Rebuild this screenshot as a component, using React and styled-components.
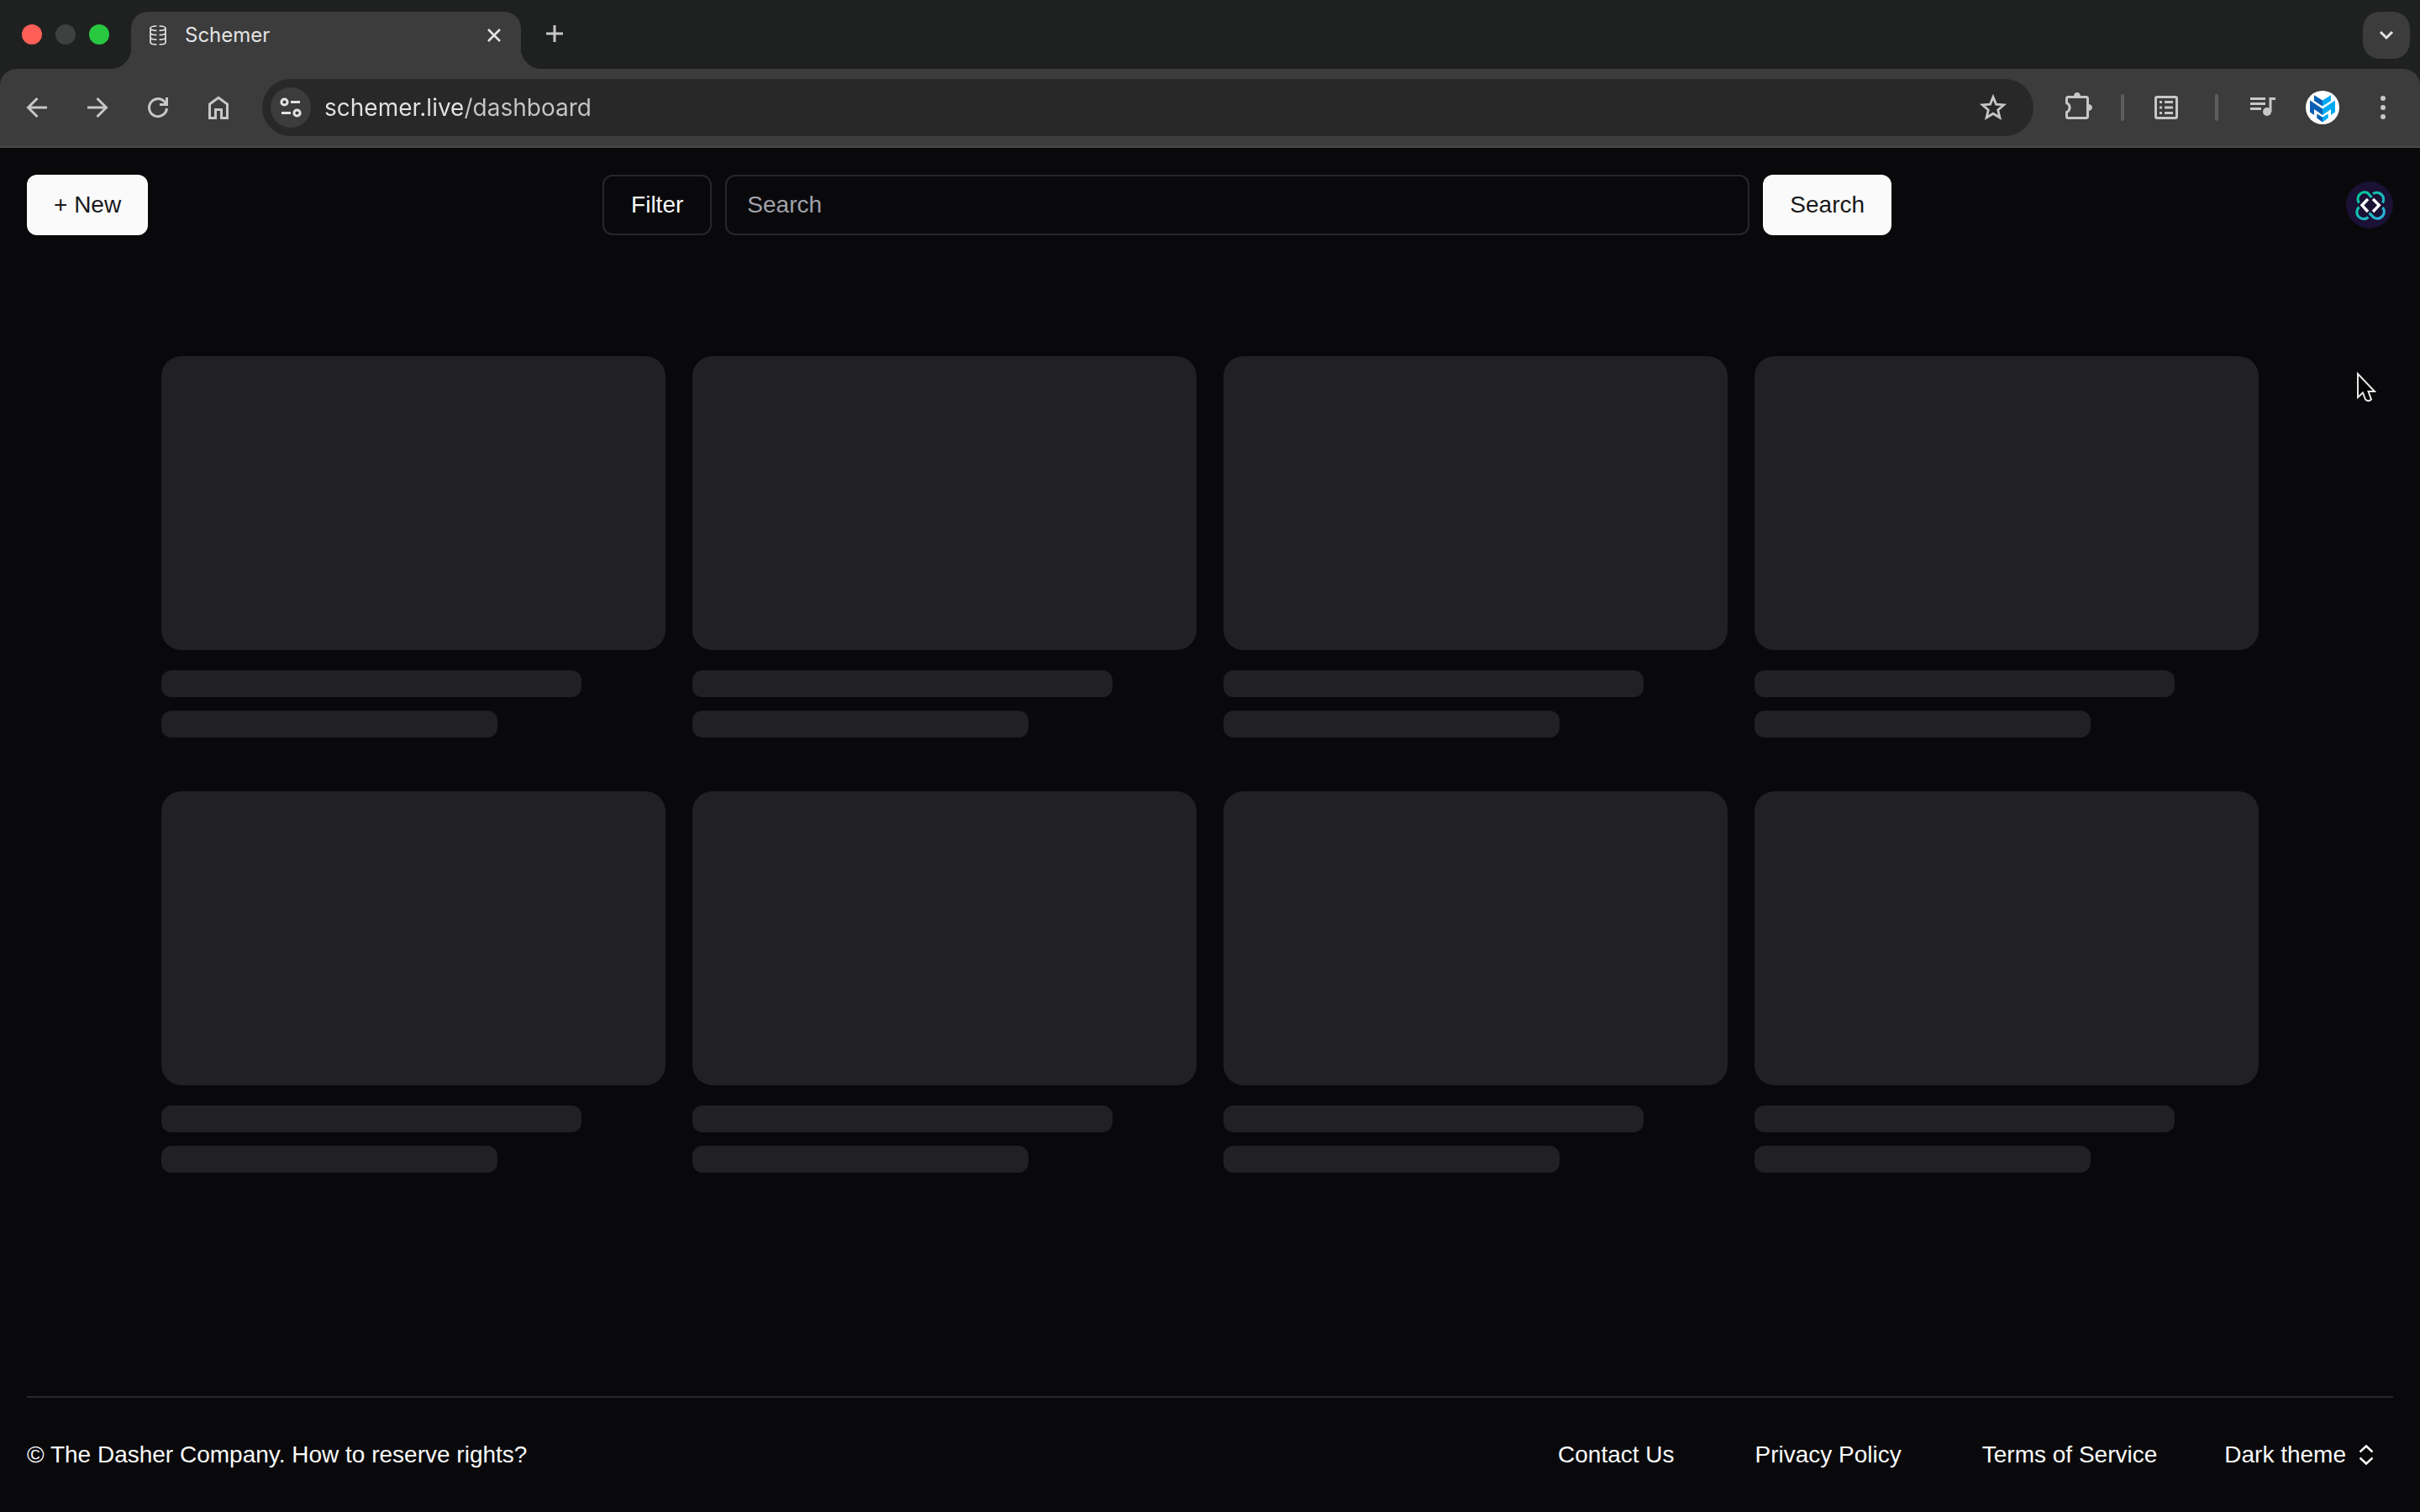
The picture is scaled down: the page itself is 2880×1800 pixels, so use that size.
import React from "react";
import styled, { createGlobalStyle } from "styled-components";

const ui = `Inter, "Noto Sans", sans-serif`;
const page = `"Liberation Sans", Arial, sans-serif`;

const GlobalStyle = createGlobalStyle`
  *, *::before, *::after { box-sizing: border-box; }
  body { margin: 0; background: #09090b; color: #fafafa; font-family: ${page}; font-size: 28px; }
  button, input, select { font: inherit; color: inherit; margin: 0; border: 0; background: none; outline: none; }
  button { cursor: pointer; padding: 0; }
  a { color: inherit; text-decoration: none; }
  svg { display: block; flex: none; overflow: visible; }
`;

const Window = styled.div`
  display: flex;
  flex-direction: column;
  min-height: 100vh;
`;

/* Browser chrome */
const TabStrip = styled.div`
  display: flex;
  height: 82px;
  padding: 14px 12px 0 26px;
  background: #1f2120;
`;
const Lights = styled.div`
  display: flex;
  gap: 16px;
  padding-top: 15px;
  width: 130px;
`;
const Light = styled.button`
  width: 24px;
  height: 24px;
  border-radius: 50%;
  background: ${(p) => p.$color};
`;
const Tab = styled.div`
  position: relative;
  display: flex;
  align-items: center;
  width: 464px;
  height: 68px;
  padding: 0 24px 12px 22px;
  border-radius: 20px 20px 0 0;
  background: #3c3c3c;
  color: #e3e3e3;
  font: 400 24px/32px ${ui};
  &::before, &::after {
    content: "";
    position: absolute;
    bottom: 0;
    width: 24px;
    height: 24px;
  }
  &::before { right: 100%; background: radial-gradient(circle at 0 0, transparent 24px, #3c3c3c 24px); }
  &::after { left: 100%; background: radial-gradient(circle at 100% 0, transparent 24px, #3c3c3c 24px); }
`;
const TabTitle = styled.span`
  flex: 1;
  padding-left: 22px;
`;
const NewTab = styled.button`
  display: grid;
  place-items: center;
  width: 48px;
  height: 52px;
  margin: 0 auto 0 16px;
  color: #c7c7c7;
`;
const TabSearch = styled.button`
  display: grid;
  place-items: center;
  width: 56px;
  height: 56px;
  border-radius: 20px;
  background: #3c3c3c;
  color: #e3e3e3;
`;
const ToolbarBack = styled.div`
  background: #1f2120;
`;
const Toolbar = styled.div`
  display: flex;
  align-items: center;
  height: 94px;
  padding: 0 20px;
  border-bottom: 2px solid #4a4a4a;
  border-radius: 20px 20px 0 0;
  background: #3c3c3c;
  color: #c7c7c7;
`;
const NavButtons = styled.div`
  display: flex;
  gap: 24px;
  padding-right: 28px;
`;
const IconButton = styled.button`
  display: grid;
  place-items: center;
  width: 48px;
  height: 48px;
  border-radius: 50%;
`;
const AddressBar = styled.div`
  display: flex;
  flex: 1;
  align-items: center;
  height: 68px;
  padding: 0 24px 0 10px;
  border-radius: 34px;
  background: #282828;
`;
const SiteInfo = styled(IconButton)`
  background: #3c3c3c;
  color: #e3e3e3;
`;
/* The host name is drawn brighter than the path after it. */
const Address = styled.input`
  flex: 1;
  min-width: 0;
  height: 48px;
  padding: 0 16px;
  font: 400 28px/36px ${ui};
  background: linear-gradient(90deg, #e3e3e3 180px, #c7c7c7 180px);
  background-clip: text;
  -webkit-text-fill-color: transparent;
`;
const Actions = styled.div`
  display: flex;
  align-items: center;
  gap: 26px;
  padding: 0 34px 0 30px;
`;
const Divider = styled.span`
  width: 4px;
  height: 32px;
  border-radius: 2px;
  background: #5e5e5e;
`;
const Media = styled.div`
  display: flex;
  align-items: center;
  gap: 24px;
  margin-left: 28px;
`;

/* Dashboard */
const Header = styled.header`
  display: flex;
  align-items: center;
  justify-content: space-between;
  padding: 32px;
`;
const Button = styled.button`
  height: 72px;
  padding: 0 32px;
  border-radius: 12px;
  border: ${(p) => (p.$outline ? "2px solid #27272a" : "0")};
  background: ${(p) => (p.$outline ? "#09090b" : "#fafafa")};
  color: ${(p) => (p.$outline ? "#fafafa" : "#18181b")};
  line-height: 40px;
  white-space: nowrap;
`;
const SearchForm = styled.form`
  display: flex;
  flex: 0 1 1534px;
  gap: 16px;
`;
const SearchInput = styled.input`
  flex: 1;
  min-width: 0;
  height: 72px;
  padding: 0 24px;
  border: 2px solid #27272a;
  border-radius: 12px;
  &::placeholder { color: #a1a1aa; opacity: 1; }
`;
const ProfileButton = styled.button`
  width: 56px;
  height: 56px;
  border-radius: 50%;
`;
const Grid = styled.main`
  display: grid;
  grid-template-columns: repeat(4, 1fr);
  gap: 64px 32px;
  padding: 112px 192px 0;
`;
const Card = styled.div`
  display: flex;
  flex-direction: column;
  gap: 16px;
`;
const Thumb = styled.div`
  height: 350px;
  margin-bottom: 8px;
  border-radius: 24px;
  background: #212123;
`;
const Line = styled.div`
  width: ${(p) => p.$width};
  height: 32px;
  border-radius: 12px;
  background: #212123;
`;
const Footer = styled.footer`
  display: flex;
  align-items: center;
  justify-content: space-between;
  height: 138px;
  margin: auto 32px 0;
  border-top: 2px solid #27272a;
  line-height: 40px;
`;
const FooterNav = styled.nav`
  display: flex;
  align-items: center;
  gap: 96px;
`;
const ThemePicker = styled.div`
  display: flex;
  align-items: center;
  gap: 12px;
  margin-left: -16px;
  padding-right: 20px;
`;
const ThemeSelect = styled.select`
  appearance: none;
  field-sizing: content;
  padding: 0;
  height: 40px;
  option { color: #18181b; }
`;
const Pointer = styled.svg`
  position: absolute;
  top: 442px;
  right: 52px;
`;

const Icon = ({ size = 32, w = 3, children, ...rest }) => (
  <svg width={size} height={size} viewBox={`0 0 ${size} ${size}`} fill="none" stroke="currentColor" strokeWidth={w} aria-hidden="true" {...rest}>
    {children}
  </svg>
);

const DatabaseIcon = () => (
  <svg width="20" height="24" viewBox="0 0 20 24" fill="none" stroke="currentColor" strokeWidth="1.7" aria-hidden="true">
    <path d="M8.400 1C4.500 1.100 1 2 1 3.700S4.500 6.300 8.400 6.400M1 3.700V20.500C1 22 4.500 22.900 8.400 23M1 9c0 1.700 3.500 2.600 7.400 2.700M1 14.500c0 1.700 3.500 2.600 7.400 2.700" />
    <path d="M11.600 1C15.500 1.100 19 2 19 3.700S15.500 6.300 11.600 6.400M19 3.700V20.500C19 22 15.500 22.900 11.600 23M19 9c0 1.700-3.500 2.600-7.400 2.700M19 14.500c0 1.700-3.500 2.600-7.400 2.700" />
  </svg>
);

const BrandBadge = () => (
  <svg width="40" height="40" viewBox="0 0 40 40" aria-hidden="true">
    <circle cx="20" cy="20" r="20" fill="#fff" />
    <path fill="#0a5fb4" d="M10 5.300L20 11.500v7L10 12zM5 11.500l15 10V29L10 22v7l-5-3.500zM13.300 27.500L20 31.500v6l-6.700-5z" />
    <path fill="#00a9f4" d="M30 5.300L20 11.500v7L30 12zM35 11.500l-15 10V29l10-7v7l5-3.500zM26.700 27.500L20 31.500v6l6.700-5z" />
  </svg>
);

const ProfileMark = () => (
  <svg width="56" height="56" viewBox="0 0 56 56" fill="none" aria-hidden="true">
    <defs>
      <linearGradient id="knot" gradientUnits="userSpaceOnUse" x1="12" y1="12" x2="45" y2="45">
        <stop offset="0" stopColor="#00c98d" />
        <stop offset="1" stopColor="#2fb0e0" />
      </linearGradient>
    </defs>
    <circle cx="28" cy="28" r="28" fill="#1a1135" />
    <g stroke="url(#knot)" strokeWidth="3.200">
      <path d="M15.500 25.500A8.100 8.100 0 0 1 25.500 13.500L30.500 19" />
      <path d="M32 14.500A8.200 8.200 0 0 1 43.500 25.500" />
      <path d="M15.500 30.500A8.100 8.100 0 0 0 26.500 42.500" />
      <path d="M27.500 37.500L33 43A8.100 8.100 0 0 0 43.500 31" />
    </g>
    <path d="M26 21L19 28.300 26 36M32 21l7.300 7.300L32 36" stroke="#fff" strokeWidth="3.400" />
  </svg>
);

export default function App() {
  return (
    <Window>
      <GlobalStyle />
      <TabStrip>
        <Lights>
          <Light $color="#ff5f57" aria-label="Close window" />
          <Light $color="#3f4140" aria-label="Minimize window" />
          <Light $color="#28c840" aria-label="Zoom window" />
        </Lights>
        <Tab>
          <DatabaseIcon />
          <TabTitle>Schemer</TabTitle>
          <button aria-label="Close tab">
            <Icon size={16} w={2.6}><path d="M1 1l14 14M15 1L1 15" /></Icon>
          </button>
        </Tab>
        <NewTab aria-label="New tab">
          <Icon size={20} w={3}><path d="M10 0v20M0 10h20" /></Icon>
        </NewTab>
        <TabSearch aria-label="Search tabs">
          <Icon size={16} w={3}><path d="M1 4l7 7 7-7" /></Icon>
        </TabSearch>
      </TabStrip>
      <ToolbarBack>
        <Toolbar>
          <NavButtons>
            <IconButton aria-label="Back">
              <Icon><path d="M28 16H6M16.500 5L5.500 16l11 11" /></Icon>
            </IconButton>
            <IconButton aria-label="Forward">
              <Icon><path d="M4 16h22M15.500 5l11 11-11 11" /></Icon>
            </IconButton>
            <IconButton aria-label="Reload">
              <Icon><path d="M26.500 17A10.500 10.500 0 1 1 23.500 8.700L26 12M26.500 4v8.500H18" /></Icon>
            </IconButton>
            <IconButton aria-label="Home">
              <Icon><path d="M5.500 12L16 4.300 26.500 12v16.500h-7v-10h-7v10h-7z" /></Icon>
            </IconButton>
          </NavButtons>
          <AddressBar>
            <SiteInfo aria-label="View site information">
              <Icon><path d="M16 9.500h11M5 22.500h11" /><circle cx="8.500" cy="9.500" r="3.600" /><circle cx="23.500" cy="22.500" r="3.600" /></Icon>
            </SiteInfo>
            <Address aria-label="Address" defaultValue="schemer.live/dashboard" spellCheck={false} />
            <IconButton aria-label="Bookmark this tab">
              <Icon w={2.8}><path d="M16 3.500l3.500 8.600 9.200.8-7 6 2.200 9.100L16 23.200 8.100 28l2.200-9.100-7-6 9.200-.8z" /></Icon>
            </IconButton>
          </AddressBar>
          <Actions>
            <IconButton aria-label="Extensions">
              <Icon>
                <path d="M3 3.500h22a1.500 1.500 0 0 1 1.500 1.500v22a1.500 1.500 0 0 1-1.500 1.500H3A1.500 1.500 0 0 1 1.500 27v-5.500a6 6 0 0 0 0-11V5A1.500 1.500 0 0 1 3 3.500z" />
                <path stroke="none" fill="currentColor" d="M10 2.500a4 4.500 0 0 1 8 0zM27.500 12a4.500 4 0 0 1 0 8z" />
              </Icon>
            </IconButton>
            <Divider />
            <IconButton aria-label="Reading list">
              <Icon>
                <rect x="3.500" y="3.500" width="25" height="25" rx="1.500" />
                <path d="M8 9.500h3M8 16h3M8 22.500h3M14 9.500h10M14 16h10M14 22.500h10" />
              </Icon>
            </IconButton>
          </Actions>
          <Divider />
          <Media>
            <IconButton aria-label="Media controls">
              <Icon>
                <path d="M2 5.500h18M2 11.500h18M2 17.500h13M32 5.500h-6V21" />
                <circle cx="22" cy="21" r="5" fill="currentColor" stroke="none" />
              </Icon>
            </IconButton>
            <IconButton aria-label="Profile"><BrandBadge /></IconButton>
            <IconButton aria-label="Menu">
              <Icon stroke="none" fill="currentColor"><circle cx="16" cy="5" r="3" /><circle cx="16" cy="16" r="3" /><circle cx="16" cy="27" r="3" /></Icon>
            </IconButton>
          </Media>
        </Toolbar>
      </ToolbarBack>

      <Header>
        <Button>+ New</Button>
        <SearchForm onSubmit={(e) => e.preventDefault()}>
          <Button type="button" $outline>Filter</Button>
          <SearchInput type="text" placeholder="Search" aria-label="Search" />
          <Button type="submit">Search</Button>
        </SearchForm>
        <ProfileButton aria-label="Account"><ProfileMark /></ProfileButton>
      </Header>

      <Grid aria-busy="true">
        {Array.from({ length: 8 }, (_, i) => (
          <Card key={i}>
            <Thumb />
            <Line $width="500px" />
            <Line $width="400px" />
          </Card>
        ))}
      </Grid>

      <Footer>
        <span>© The Dasher Company. How to reserve rights?</span>
        <FooterNav>
          <a href="#contact">Contact Us</a>
          <a href="#privacy">Privacy Policy</a>
          <a href="#terms">Terms of Service</a>
          <ThemePicker>
            <ThemeSelect aria-label="Theme" defaultValue="dark">
              <option value="dark">Dark theme</option>
              <option value="light">Light theme</option>
            </ThemeSelect>
            <Icon size={24} w={2.4}><path d="M4.500 8.500L12 1.500l7.500 7M4.500 15.500l7.500 7 7.500-7" /></Icon>
          </ThemePicker>
        </FooterNav>
      </Footer>

      <Pointer width="24" height="38" viewBox="0 0 24 38" fill="#000" stroke="#e8e8e8" strokeWidth="2" aria-hidden="true">
        <path d="M2 3v28l6-5.500 3 8q3.500 3.500 7 0L14.500 24H22z" />
      </Pointer>
    </Window>
  );
}
